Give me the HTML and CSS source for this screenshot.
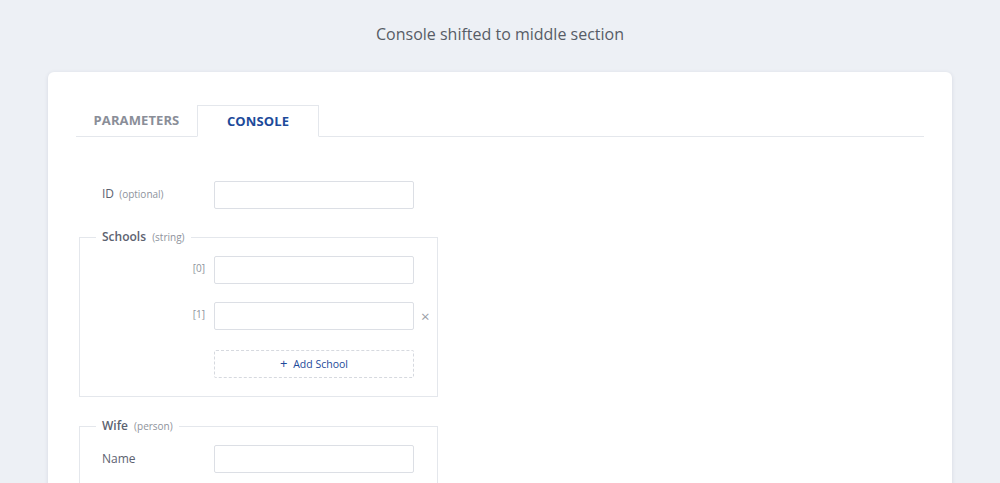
FILE: index.html
```html
<!DOCTYPE html>
<html>
<head>
<meta charset="utf-8">
<link rel="stylesheet" href="styles.css">
</head>
<body>
<h1 class="title">Console shifted to middle section</h1>
<div class="card">
  <div class="tabs">
    <div class="tab">PARAMETERS</div>
    <div class="tab active">CONSOLE</div>
  </div>
  <div class="form">
    <div class="row">
      <label class="label">ID <span class="hint">(optional)</span></label>
      <input class="input" type="text">
    </div>
    <fieldset class="group">
      <legend class="legend">Schools <span class="hint">(string)</span></legend>
      <div class="row inner">
        <label class="label index">[0]</label>
        <input class="input" type="text">
      </div>
      <div class="row inner">
        <label class="label index">[1]</label>
        <input class="input" type="text">
        <span class="remove">×</span>
      </div>
      <div class="row inner add-row">
        <span class="label"></span>
        <button class="add"><span class="plus">+</span> Add School</button>
      </div>
    </fieldset>
    <fieldset class="group tall">
      <legend class="legend">Wife <span class="hint">(person)</span></legend>
      <div class="row inner">
        <label class="label name">Name</label>
        <input class="input" type="text">
      </div>
    </fieldset>
  </div>
</div>
</body>
</html>
```

FILE: styles.css
```css
* { box-sizing: border-box; }
html, body { margin: 0; padding: 0; }
body {
  background: #edf0f5;
  font-family: "Open Sans", "Noto Sans", sans-serif;
  color: #5c6270;
  height: 483px;
  overflow: hidden;
}
.title {
  margin: 0;
  padding-top: 22px;
  height: 72px;
  text-align: center;
  font-size: 16px;
  font-weight: 400;
  line-height: 24px;
  color: #575c66;
}
.card {
  margin: 0 48px;
  background: #fff;
  border-radius: 6px;
  box-shadow: 0 1px 4px rgba(40, 50, 80, 0.12);
  padding: 33px 28px 40px;
  min-height: 500px;
}
.tabs {
  display: flex;
  border-bottom: 1px solid #e4e7ec;
  height: 32px;
}
.tab {
  width: 121px;
  height: 32px;
  text-align: center;
  font-size: 13px;
  font-weight: 700;
  line-height: 31px;
  color: #8a8e98;
  letter-spacing: 0.1px;
}
.tab.active {
  width: 122px;
  color: #1d4a9a;
  background: #fff;
  border: 1px solid #e4e7ec;
  border-bottom: 1px solid #fff;
  height: 32px;
  line-height: 30px;
}
.form {
  padding-top: 44px;
}
.row {
  display: flex;
  align-items: center;
  padding-left: 26px;
  height: 28px;
}
.label {
  width: 112px;
  font-size: 12px;
  line-height: 16px;
  color: #5c6270;
  margin-bottom: 3px;
}
.label.name { margin-bottom: 1px; }
.hint {
  font-size: 10px;
  color: #8e939c;
  margin-left: 2px;
}
.label.index {
  text-align: right;
  padding-right: 9px;
  font-size: 10px;
  color: #8e939c;
  margin-bottom: 4px;
}
.input {
  width: 200px;
  height: 28px;
  border: 1px solid #dcdfe5;
  border-radius: 2px;
  background: #fff;
  margin: 0;
  padding: 0 8px;
  outline: none;
}
.remove {
  margin-left: 7px;
  font-size: 15px;
  color: #9a9ea6;
  line-height: 28px;
}
.group {
  margin: 20px 0 0 3px;
  padding: 11px 0 18px 0;
  width: 359px;
  border: 1px solid #e4e7ec;
  min-inline-size: 0;
}
.group + .group { margin-top: 21px; }
.group.tall { padding-top: 11px; padding-bottom: 40px; }
.legend {
  margin-left: 16px;
  padding: 0 6px;
  font-size: 12px;
  font-weight: 600;
  line-height: 16px;
  color: #5c6270;
}
.legend .hint { font-weight: 400; margin-left: 3px; }
.row.inner {
  padding-left: 22px;
  margin-bottom: 18px;
}
.row.inner:last-child { margin-bottom: 0; }
.row.inner.add-row { margin-top: 20px; }
.row.inner.add-row .label { margin: 0; }
.add {
  width: 200px;
  height: 28px;
  margin: 0;
  border: 1px dashed #d6d9df;
  border-radius: 2px;
  background: #fff;
  font-family: "Open Sans", "Noto Sans", sans-serif;
  font-size: 10.5px;
  line-height: 14px;
  color: #1d4a9a;
  padding: 0 0 1px 0;
}
.plus { font-size: 13px; margin-right: 3px; }
```
